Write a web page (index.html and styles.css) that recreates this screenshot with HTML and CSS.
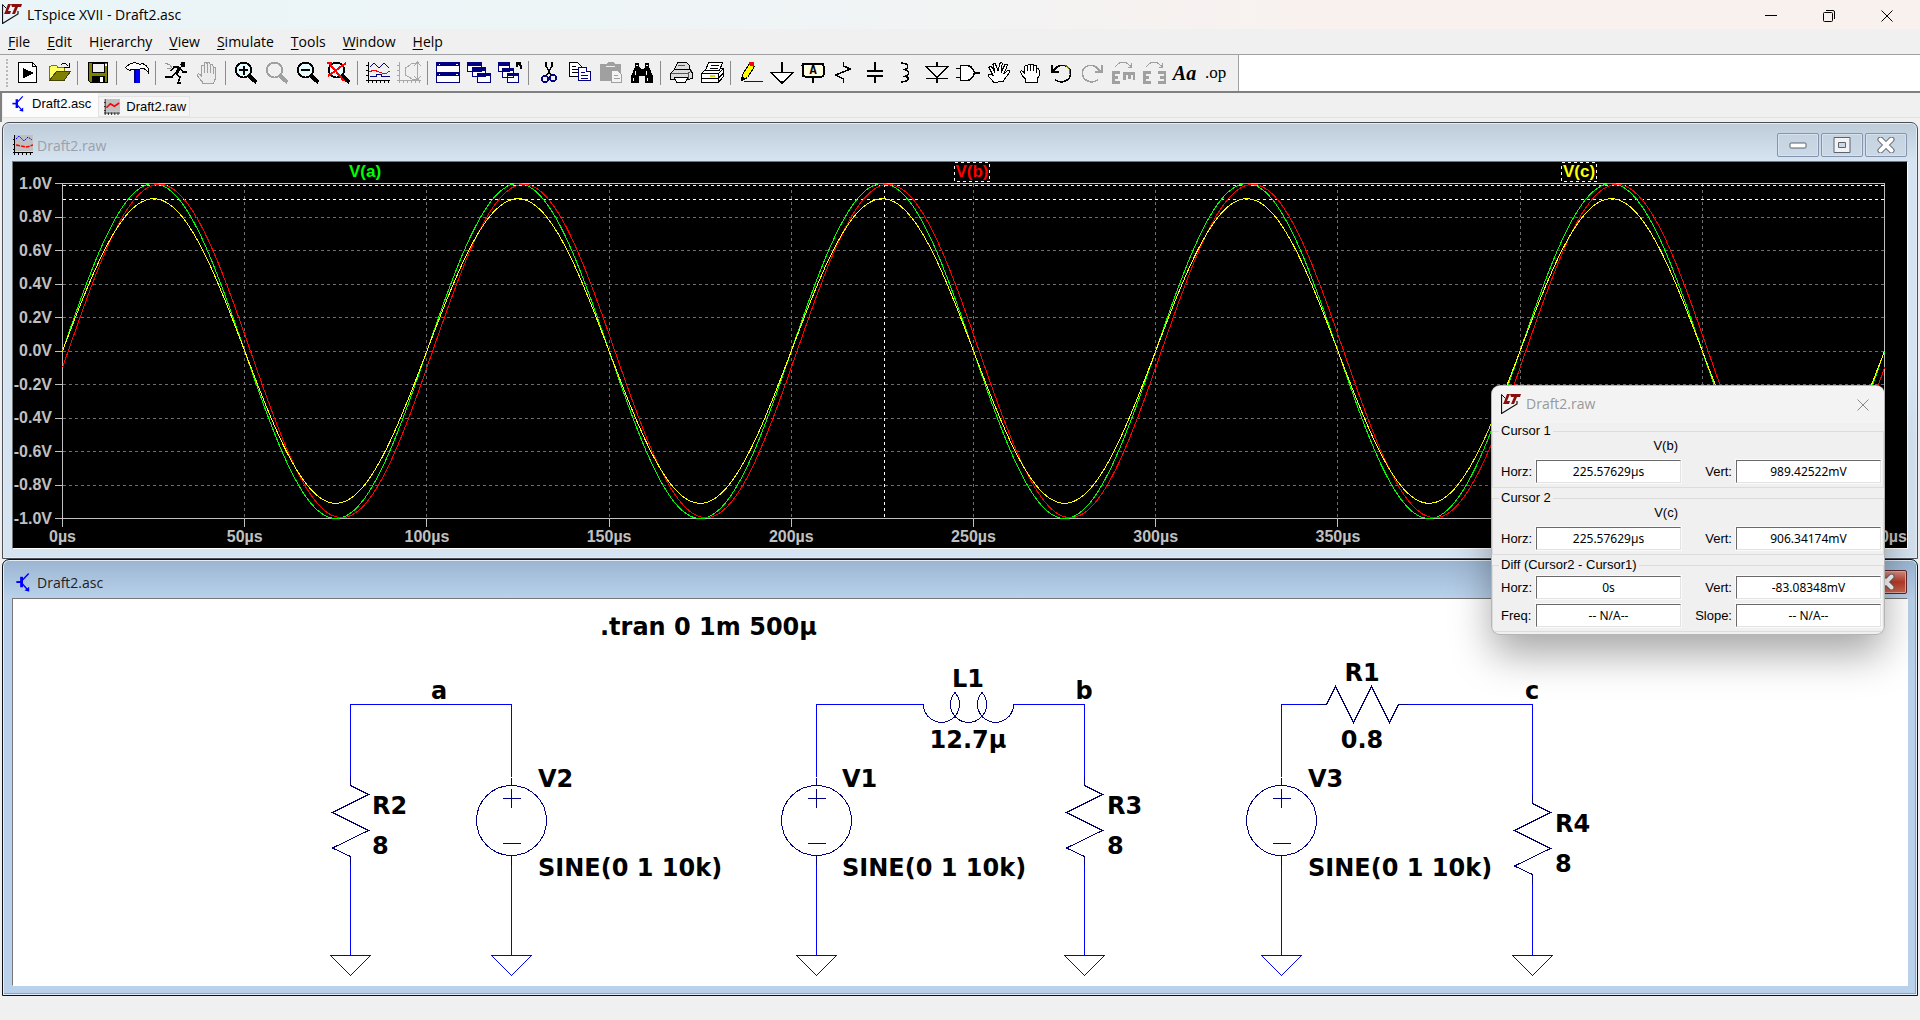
FILE: index.html
```html
<!DOCTYPE html>
<html lang="en">
<head>
  <meta charset="UTF-8" />
  <meta name="viewport" content="width=device-width, initial-scale=1.0"/>
  <title>LTspice XVII - Draft2.asc</title>
  <link rel="stylesheet" href="styles.css">
</head>
<body>
  <!-- Shared symbols -->
  <svg class="defs" width="0" height="0" aria-hidden="true">
    <symbol id="lt-logo" viewBox="0 0 20 20">
      <path d="M.5 .5v19L16 10V7" fill="none" stroke="#111" stroke-width="1.200"/>
      <path d="M.5 .5l4 4" fill="none" stroke="#111"/>
      <path d="M6 0h3L6 7h3l-1 3H2l1-2zM9 0h11l-1 3h-3l-3 7h-3l3-7h-3z" fill="#8b0d0d"/>
    </symbol>
    <symbol id="transistor" viewBox="0 0 16 20">
      <path d="M1 9.500h5" stroke="#00f" stroke-width="2"/>
      <path d="M6.500 4v11" stroke="#00f" stroke-width="3"/>
      <path d="M7 8l7-7.500M7 11l7 8" stroke="#00f" stroke-width="1.500" fill="none"/>
      <path d="M14.500 19.500v-5l-5 4z" fill="#00f"/>
    </symbol>
    <symbol id="wave-doc" viewBox="0 0 20 20">
      <path d="M2 0h18v16H2z" fill="#c0c0c0"/>
      <path d="M1.500 0v20M0 17.500h20M0 4.500h2M0 9.500h2M0 14.500h2M5.500 17v3M9.500 17v3M13.500 17v3M17.500 17v3" stroke="#000"/>
    </symbol>
    <symbol id="hand" viewBox="0 0 24 24">
      <path d="M8 22.500C7 19 2 16.500 2.500 13.500c1-1.500 2.500 0 4 1.500V5.500c0-2 2.500-2 2.500 0V3c0-2 3-2 3 0v-.5c0-2 3-2 3 0V5c0-2 3-2 3 0v3c0-2 2.500-2 2.500 0v8c0 3-1.500 4-2 6.500zM9.500 5v7M12.500 3v9M15.500 4v8M18 8v5"/>
    </symbol>
    <symbol id="fist" viewBox="0 0 24 24">
      <path d="M7.500 21.500V18C5 16 3 13 2.500 10.500c1-1.500 3 0 4 2V6c.5-2 3-2 3 0V5c.5-2 3-2 3 0 .5-2 3-2 3 0v1c.5-2 3-2 3 0v3c.5-2 2.500-2 2.500 0v6l-2 3v3.500zM9.500 6v4M12.500 5v5M15.500 6v4M18.500 9v3"/>
    </symbol>
    <symbol id="lens" viewBox="0 0 24 24">
      <circle cx="9.500" cy="9" r="7.500" stroke-width="2"/>
      <path d="M15.500 15l7 6.500" stroke-width="4"/>
    </symbol>
    <symbol id="minimize" viewBox="0 0 20 16">
      <rect x="2" y="6" width="16" height="5" rx="1" fill="#fff" stroke="#5b6270"/>
    </symbol>
    <symbol id="maximize" viewBox="0 0 20 16">
      <path d="M2 .5h16v15H2z" fill="#f3f3f3" stroke="#5b6270"/>
      <path d="M6.500 5.500h7v5h-7z" fill="#cbd8e5" stroke="#5b6270"/>
    </symbol>
    <symbol id="cross" viewBox="0 0 20 16">
      <path d="M4.500 2.500l11 11M15.500 2.500l-11 11" fill="none" stroke="#5b6270" stroke-width="6" stroke-linecap="round"/>
      <path d="M4.500 2.500l11 11M15.500 2.500l-11 11" fill="none" stroke="#fff" stroke-width="4" stroke-linecap="round"/>
    </symbol>
    <symbol id="source" viewBox="-40 -40 80 80" overflow="visible">
      <circle r="35"/>
      <path d="M0-32v19M-9-22H9M-9 23H9M0-43v8M0 35v9"/>
    </symbol>
  </svg>

  <header class="titlebar">
    <svg class="app-icon"><use href="#lt-logo"/></svg>
    <h1>LTspice XVII - Draft2.asc</h1>
    <div class="caption-buttons">
      <button aria-label="Minimize"><svg viewBox="0 0 14 14"><path d="M1 6.500h12"/></svg></button>
      <button aria-label="Restore"><svg viewBox="0 0 14 14"><rect x="1.500" y="3.500" width="9" height="9" rx="1"/><path d="M4 1.500h7q1.500 0 1.500 1.500v7"/></svg></button>
      <button aria-label="Close"><svg viewBox="0 0 14 14"><path d="M1.500 1.500l11 11M12.500 1.500l-11 11"/></svg></button>
    </div>
  </header>

  <nav class="menubar">
    <button><u>F</u>ile</button>
    <button><u>E</u>dit</button>
    <button>H<u>i</u>erarchy</button>
    <button><u>V</u>iew</button>
    <button><u>S</u>imulate</button>
    <button><u>T</u>ools</button>
    <button><u>W</u>indow</button>
    <button><u>H</u>elp</button>
  </nav>

  <div class="toolbar-row">
    <div class="toolbar" role="toolbar" aria-label="Main">
      <button aria-label="New Schematic"><svg viewBox="0 0 24 24"><path d="M2.500 1.500h14l4 4v16h-18z" fill="#fff" stroke="#000"/><path d="M16.500 1.500v4h4" fill="none" stroke="#000"/><path d="M7 7l11 5-11 5.500z"/></svg></button>
      <button aria-label="Open"><svg viewBox="0 0 24 24"><path d="M2.500 19.500V6l2-1.500h5L11 6.500h6.500V11H9z" fill="#ff6" stroke="#770"/><path d="M2.500 19.500l7-9h14l-6.500 9z" fill="#808000" stroke="#440"/><path d="M14 4q3-4 7 1M22 1.500v4.500h-5" fill="none" stroke="#000"/></svg></button>
      <span class="separator"></span>
      <button aria-label="Save"><svg viewBox="0 0 24 24"><path d="M2.500 1.500h19v20H4.500l-2-2z" fill="#808000" stroke="#000"/><path d="M6 2h12v9H6z" fill="#efefef" stroke="#000"/><path d="M6 14.500h13V22H6z"/><path d="M14 16h3v5h-3z" fill="#fff"/><path d="M19 3h2v2h-2z" fill="#fff"/></svg></button>
      <span class="separator"></span>
      <button aria-label="Control Panel"><svg viewBox="0 0 24 24"><path d="M9 9h6v13H9z" fill="#00f"/><path d="M9 9h2v13H9z" fill="#000080"/><path d="M.5 6.500C5 1.500 11 .5 15 3.500c2-2 6 0 8 3.500v4c-2-3-5-4-8-3H7.500C6 8 5.500 9 5 9.500L2.500 8.500z" fill="#fff" stroke="#000"/></svg></button>
      <span class="separator"></span>
      <button aria-label="Run"><svg viewBox="0 0 24 24"><path d="M1 2l5 2 3 4M3 7h4" fill="none" stroke="#999"/><circle cx="19" cy="3.500" r="2.500"/><path d="M16 6l-4 7" stroke="#000" stroke-width="3"/><path d="M16 7l3 4h4M15 6h-5l-3 4M12 13l4 3-2 6h3M11 12l-3 4H1" fill="none" stroke="#000" stroke-width="1.500"/></svg></button>
      <button aria-label="Halt" disabled><svg class="grey-fill"><use href="#hand"/></svg></button>
      <span class="separator"></span>
      <button aria-label="Zoom area"><svg class="zoom"><use href="#lens"/><path d="M5 9h9M9.500 4.500v9" stroke="#000" stroke-width="2"/></svg></button>
      <button aria-label="Pan" disabled><svg class="zoom grey-line"><use href="#lens"/></svg></button>
      <button aria-label="Zoom back"><svg class="zoom"><use href="#lens"/><path d="M5 9h9" stroke="#000" stroke-width="2"/></svg></button>
      <button aria-label="Zoom full extents"><svg class="zoom"><use href="#lens"/><path d="M1 1l16 19M19 2L1 15M0 2h5" fill="none" stroke="#f00" stroke-width="2"/></svg></button>
      <span class="separator"></span>
      <button aria-label="Autorange"><svg viewBox="0 0 24 24" fill="none"><path d="M2.500 1v21M0 19.500h24M0 4.500h2M0 9.500h2M0 14.500h2M6.500 19v3M10.500 19v3M14.500 19v3M18.500 19v3M22.500 19v3" stroke="#000"/><path d="M4 6l4-4 5 5 5-5 5 5M4 15.500h6v-2h5v2h9" stroke="#000080"/><path d="M3 11l5-2 5 2 6 2 5-3" stroke="#f00"/></svg></button>
      <button aria-label="Plot settings" disabled><svg viewBox="0 0 24 24" fill="none" stroke="#a8a8a8"><path d="M2.500 1v21M0 19.500h24M0 4.500h2M0 9.500h2M0 14.500h2M6.500 19v3M10.500 19v3M14.500 19v3M18.500 19v3M22.500 19v3M20 2.500h-5L8.500 7v7l6.500 4h5M20.500 1v18M17 5l3.500-4L24 5M17 15l3.500 4 3.500-4"/></svg></button>
      <span class="separator"></span>
      <button aria-label="Tile Horizontally"><svg viewBox="0 0 24 24"><path d="M.5 1.500h23v10H.5zM.5 11.500h23v10H.5z" fill="#fff" stroke="#000080"/><path d="M1 2h22v3H1zM1 12h22v3H1z" fill="#000080"/><path d="M3 3h1M20 3h2M3 13h1M20 13h2" stroke="#fff"/></svg></button>
      <button aria-label="Cascade"><svg viewBox="0 0 24 24"><g fill="#fff" stroke="#000080"><path d="M.5 1.500h14v9H.5zM5.500 6.500h13v9h-13zM10.500 12.500h13v9h-13z"/></g><path d="M1 2h13v3H1zM6 7h12v3H6zM11 13h12v2H11z" fill="#000080"/></svg></button>
      <button aria-label="Close all"><svg viewBox="0 0 24 24"><g fill="#fff" stroke="#000080"><path d="M.5 1.500h11v9H.5zM4.500 7.500h11v9h-11zM9.500 12.500h11v9h-11z"/></g><path d="M1 2h10v3H1zM5 8h10v2H5zM10 13h10v2H10z" fill="#000080"/><path d="M23 8V5l-4-3M18.500 6V1.500H23" fill="none" stroke="#000" stroke-width="2"/></svg></button>
      <span class="separator"></span>
      <button aria-label="Cut"><svg viewBox="0 0 24 24" fill="none"><path d="M9 1v4l5 9M15 1v4l-5 9" stroke="#000" stroke-width="1.500"/><circle cx="8" cy="18" r="3" stroke="#000080" stroke-width="1.500"/><circle cx="16" cy="17" r="3" stroke="#000080" stroke-width="1.500"/></svg></button>
      <button aria-label="Copy"><svg viewBox="0 0 24 24" fill="#fff"><path d="M1.500 1.500h8l4 4v10h-12z" stroke="#000"/><path d="M4 5h4M4 8h6M4 11h6" stroke="#000"/><path d="M10.500 6.500h8l4 4v9h-12z" stroke="#000080"/><path d="M18.500 6.500v4h4M13 11h4M13 14h7M13 17h7" stroke="#000080"/></svg></button>
      <button aria-label="Paste"><svg viewBox="0 0 24 24"><path d="M1 3h6l2-2h5l2 2h6v17H1z" fill="#a0a0a0"/><path d="M7 5h9" stroke="#eee"/><path d="M12.500 9.500h6l4 4v8h-10z" fill="#f3f3f3" stroke="#a0a0a0"/><path d="M15 14h4M15 17h6" stroke="#a0a0a0"/></svg></button>
      <button aria-label="Find"><svg viewBox="0 0 24 24"><path d="M5 2h4v4l2 2h2l2-2V2h4v4l4 9v7h-8v-7H9v7H1v-7l4-9z"/><path d="M6 4h2M16 4h2M5 10v4M16 10v4M3 17v3M17 17v3" stroke="#fff"/></svg></button>
      <span class="separator"></span>
      <button aria-label="Print Setup"><svg viewBox="0 0 24 24" stroke="#000"><path d="M5.500 8.500l3-7h9l3 3v4M1.500 12.500l4-4h16l1.500 3v6l-4 1h-17z" fill="#ddd"/><path d="M5.500 16.500h13l-2 5h-9z" fill="#fff"/><path d="M2 12.500h17l4-3M19 13v5M9 4h7" fill="none" stroke="#555"/></svg></button>
      <button aria-label="Print"><svg viewBox="0 0 24 24" stroke="#000" fill="#fff"><path d="M1.500 12.500l5-5h17v8l-5 6h-17z"/><path d="M5.500 9.500l3-8h14l-3 8z"/><path d="M1.500 12.500h17v9M18.500 12.500l5-5M2 17.500h16l5-5M11 4h8M10 7h8" fill="none"/><path d="M10 15h5" stroke="#dd0" stroke-width="2"/></svg></button>
      <span class="separator"></span>
      <button aria-label="Wire"><svg viewBox="0 0 24 24"><path d="M2.500 19.500l1-6 7-11 5 3-7 11z" fill="#ff0" stroke="#000"/><path d="M2 20l1-5 4 3z"/><path d="M10 1h5v5l-5-2z" fill="#f00"/><path d="M5 20.500h19" stroke="#00f"/></svg></button>
      <button aria-label="Ground"><svg viewBox="0 0 24 24"><path d="M12 1v10M1 11.500h22l-11 10.500z" fill="#fff" stroke="#000" stroke-width="1.500"/></svg></button>
      <button aria-label="Label Net"><svg viewBox="0 0 24 24"><rect x="1.500" y="2.500" width="21" height="13" rx="2" fill="#ffffe0" stroke="#000" stroke-width="2"/><path d="M12 16v6" stroke="#000" stroke-width="2"/><text x="12" y="13" class="net-letter">A</text></svg></button>
      <button aria-label="Resistor"><svg viewBox="0 0 24 24"><path d="M11.500 1v4l7 3-15 6 8 4v4" fill="none" stroke="#000" stroke-width="1.500"/></svg></button>
      <button aria-label="Capacitor"><svg viewBox="0 0 24 24"><path d="M12 1v9M12 15v7" stroke="#000" stroke-width="1.500"/><path d="M4 10h16M4 15h16" stroke="#000" stroke-width="2"/></svg></button>
      <button aria-label="Inductor"><svg viewBox="0 0 24 24"><path d="M8 1v1.500c7-1 8 6 1 6 8 0 7 7 0 7 7-1 7 5-1 5V22" fill="none" stroke="#000" stroke-width="1.500"/></svg></button>
      <button aria-label="Diode"><svg viewBox="0 0 24 24"><path d="M12 1v4M1 5.500h22l-11 11zM1 17.500h22M12 18v4" fill="none" stroke="#000" stroke-width="1.500"/></svg></button>
      <button aria-label="Component"><svg viewBox="0 0 24 24"><path d="M4.500 4.500h6c5 0 7 4 8 7-1 4-3 8-8 8h-6zM0 7.500h4M0 16.500h4M19 12h5" fill="#fff" stroke="#000" stroke-width="1.500"/></svg></button>
      <button aria-label="Move"><svg viewBox="0 0 24 24"><path d="M7 21.500l-6-7c0-2 2-2 5 0l-4-8c0-2 2-2 3 0l3 5-2-8c1-2 2-2 3 1l2 5 2-7c2-2 3 0 2 2l-1 7 4-8c2-1 3 0 2 2l-3 7 4-3c2 0 2 2 0 4l-5 7z" fill="#fff" stroke="#000"/></svg></button>
      <button aria-label="Drag"><svg class="white-fill"><use href="#fist"/></svg></button>
      <button aria-label="Undo"><svg viewBox="0 0 24 24" fill="none"><path d="M5 9c4-6 13-6 16 0 2 7-2 11-8 12-3 0-5-1-7-2" stroke="#000" stroke-width="1.500"/><path d="M16 4c4 2 5 5 5 9" stroke="#770"/><path d="M2.500 4v7h7M3 11l5-5" stroke="#000" stroke-width="2"/></svg></button>
      <button aria-label="Redo" disabled><svg viewBox="0 0 24 24" fill="none"><path d="M19 9C15 3 6 3 3 9c-2 7 2 11 8 12 3 0 5-1 7-2" stroke="#a0a0a0" stroke-width="1.500"/><path d="M21.500 4v7h-7M21 11l-5-5" stroke="#a0a0a0" stroke-width="2"/></svg></button>
      <button aria-label="Rotate" disabled><svg viewBox="0 0 24 24" fill="none" stroke="#a0a0a0"><path d="M4 6l5-4.500h6l5 4M20.500 2v4h-4"/><path d="M9 11H2v10h7M2 16h5M12 12.500h12M13 13v6M18 13v5M23 13v6" stroke-width="3"/></svg></button>
      <button aria-label="Mirror" disabled><svg viewBox="0 0 24 24" fill="none" stroke="#a0a0a0"><path d="M4 6l5-4.500h6l5 4M20.500 2v4h-4"/><path d="M9 11H2v10h7M2 16h5M16 11h7v10h-7M23 16h-5" stroke-width="3"/></svg></button>
      <button class="text-tool aa" aria-label="Text">Aa</button>
      <button class="text-tool" aria-label="SPICE Directive">.op</button>
    </div>
  </div>

  <nav class="tabs">
    <a class="tab active" href="#schematic"><svg class="tab-bjt"><use href="#transistor"/></svg>Draft2.asc</a>
    <a class="tab" href="#waveform"><svg viewBox="0 0 20 20"><use href="#wave-doc"/><path d="M3 11l5-5 5 3 6-4" fill="none" stroke="#f00" stroke-width="2"/></svg>Draft2.raw</a>
  </nav>

  <main class="workspace">
    <section class="window" id="waveform">
      <header class="window-title">
        <svg viewBox="0 0 20 20"><use href="#wave-doc"/><path d="M3 4l3-3 5 5 4-4 4 3" fill="none" stroke="#00f" stroke-dasharray="2 1"/><path d="M3 10l5 1 6 1 6-2" fill="none" stroke="#f00" stroke-width="1.500" stroke-dasharray="4 1"/></svg>
        <h2>Draft2.raw</h2>
        <div class="window-buttons">
          <button aria-label="Minimize"><svg><use href="#minimize"/></svg></button>
          <button aria-label="Maximize"><svg><use href="#maximize"/></svg></button>
          <button aria-label="Close"><svg><use href="#cross"/></svg></button>
        </div>
      </header>
      <div class="window-body">
        <svg class="plot" viewBox="0 0 1894 386" id="plot"></svg>
      </div>
    </section>

    <section class="window focused" id="schematic">
      <header class="window-title">
        <svg class="title-bjt"><use href="#transistor"/></svg>
        <h2>Draft2.asc</h2>
        <div class="window-buttons">
          <button aria-label="Minimize"><svg><use href="#minimize"/></svg></button>
          <button aria-label="Maximize"><svg><use href="#maximize"/></svg></button>
          <button class="close" aria-label="Close"><svg><use href="#cross"/></svg></button>
        </div>
      </header>
      <div class="window-body">
        <svg class="circuit" viewBox="0 0 1894 386">
          <!-- Wires and grounds -->
          <g class="wire">
            <path d="M337.500 186V105.500h161V178M337.500 257v99.500M498.500 266v90.500"/>
            <path d="M803.500 178V105.500h107M1000.500 105.500h71V186M803.500 266v90.500M1071.500 257v99.500"/>
            <path d="M1268.500 178V105.500h36M1394 105.500h125.500V196M1268.500 266v90.500M1519.500 284v72.500"/>
            <path d="M317.500 356.500h40l-20 20zM478.500 356.500h40l-20 20zM783.500 356.500h40l-20 20zM1051.500 356.500h40l-20 20zM1248.500 356.500h40l-20 20zM1499.500 356.500h40l-20 20z"/>
          </g>
          <!-- Parts -->
          <g class="part">
            <path d="M337.500 178v8.500l18 9-36 18 36 18-36 17.500 18 8.500v8"/>
            <path d="M1071.500 178v8.500l18 9-36 18 36 18-36 17.500 18 8.500v8"/>
            <path d="M1519.500 196v8.500l18 9-36 18 36 18-36 17.500 18 8.500v9"/>
            <path d="M1304 105.500h9.500l9-18 18 36 18-36 18 36 9-18h9"/>
            <path d="M910.500 105.500A18 18 0 1 0 942 93.500A18 18 0 1 0 969 93.500A18 18 0 1 0 1000.500 105.500"/>
            <use href="#source" x="458.500" y="181.500" width="80" height="80"/>
            <use href="#source" x="763.500" y="181.500" width="80" height="80"/>
            <use href="#source" x="1228.500" y="181.500" width="80" height="80"/>
          </g>
          <g class="label">
            <text x="587" y="36">.tran 0 1m 500µ</text>
            <text x="359" y="215">R2</text>
            <text x="359" y="255">8</text>
            <text x="525" y="188">V2</text>
            <text x="525" y="277">SINE(0 1 10k)</text>
            <text x="829" y="188">V1</text>
            <text x="829" y="277">SINE(0 1 10k)</text>
            <text x="1094" y="215">R3</text>
            <text x="1094" y="255">8</text>
            <text x="1295" y="188">V3</text>
            <text x="1295" y="277">SINE(0 1 10k)</text>
            <text x="1542" y="233">R4</text>
            <text x="1542" y="273">8</text>
          </g>
          <g class="label centered">
            <text x="426" y="100">a</text>
            <text x="955" y="88">L1</text>
            <text x="955" y="149">12.7µ</text>
            <text x="1071" y="100">b</text>
            <text x="1349" y="82">R1</text>
            <text x="1349" y="149">0.8</text>
            <text x="1519" y="100">c</text>
          </g>
        </svg>
      </div>
    </section>
  </main>

  <!-- Cursor readout -->
  <section class="cursor-dialog">
    <header>
      <svg class="app-icon"><use href="#lt-logo"/></svg>
      <h2>Draft2.raw</h2>
      <button aria-label="Close"><svg viewBox="0 0 14 14"><path d="M1.500 1.500l11 11M12.500 1.500l-11 11"/></svg></button>
    </header>
    <fieldset>
      <legend>Cursor 1</legend>
      <div class="readout">
        <span class="trace">V(b)</span>
        <label for="c1h">Horz:</label><input id="c1h" value="225.57629µs" readonly>
        <label for="c1v">Vert:</label><input id="c1v" value="989.42522mV" readonly>
      </div>
    </fieldset>
    <fieldset>
      <legend>Cursor 2</legend>
      <div class="readout">
        <span class="trace">V(c)</span>
        <label for="c2h">Horz:</label><input id="c2h" value="225.57629µs" readonly>
        <label for="c2v">Vert:</label><input id="c2v" value="906.34174mV" readonly>
      </div>
    </fieldset>
    <fieldset>
      <legend>Diff (Cursor2 - Cursor1)</legend>
      <div class="readout diff">
        <label for="dh">Horz:</label><input id="dh" value="0s" readonly>
        <label for="dv">Vert:</label><input id="dv" value="-83.08348mV" readonly>
        <label for="df">Freq:</label><input id="df" value="-- N/A--" readonly>
        <label for="ds">Slope:</label><input id="ds" value="-- N/A--" readonly>
      </div>
    </fieldset>
  </section>

  <script src="script.js"></script>
</body>
</html>
```
FILE: styles.css
```css
* {
  box-sizing: border-box;
}
body {
  margin: 0;
  min-height: 100vh;
  position: relative;
  background: #f0f0f0;
  color: #000;
  font-family: "Open Sans", "Noto Sans", sans-serif;
  font-size: 14px;
}
h1, h2 {
  margin: 0;
  font-size: 14px;
  font-weight: normal;
}
button {
  padding: 0;
  border: 0;
  background: none;
  color: inherit;
  font: inherit;
}
.defs {
  position: absolute;
}
.app-icon {
  width: 20px;
  height: 20px;
}

/* Application title and menu */
.titlebar {
  display: flex;
  align-items: center;
  gap: 5px;
  height: 29px;
  padding: 0 4px 1px 2px;
  background: linear-gradient(90deg, #e9f5f8, #eff4f6 40%, #f9f1ee 70%);
}
.caption-buttons {
  display: flex;
  margin-left: auto;
}
.caption-buttons button {
  width: 58px;
  height: 26px;
}
.caption-buttons svg,
.cursor-dialog button svg {
  width: 14px;
  height: 14px;
  fill: none;
  stroke: #000;
  vertical-align: middle;
}
.menubar {
  display: flex;
  gap: 17px;
  height: 26px;
  padding: 0 8px;
  border-bottom: 1px solid #a0a0a0;
}
.menubar u {
  text-underline-offset: 2px;
}

/* Toolbar */
.toolbar-row {
  display: flex;
  height: 38px;
  background: #fff;
  border-bottom: 2px solid #808080;
}
.toolbar {
  display: flex;
  align-items: center;
  padding: 0 7px 0 6px;
  background: #f0f0f0;
  border-right: 1px solid #a0a0a0;
}
.toolbar::before {
  content: "";
  height: 28px;
  margin-right: 4px;
  border-left: 2px dotted #b8b8b8;
}
.toolbar button {
  flex: none;
  width: 31px;
  height: 31px;
}
.toolbar svg {
  display: block;
  width: 24px;
  height: 24px;
  margin: 0 auto;
  shape-rendering: crispEdges;
}
.separator {
  flex: none;
  width: 8px;
  height: 24px;
  background: linear-gradient(#8c8c8c, #8c8c8c) 3px 0 / 1px 100% no-repeat;
}
.zoom {
  fill: #e4fbff;
  stroke: #000;
}
.grey-line {
  fill: #f0f0f0;
  stroke: #a0a0a0;
}
.grey-fill {
  fill: #ececec;
  stroke: #a0a0a0;
}
.white-fill {
  fill: #fff;
  stroke: #000;
}
.net-letter {
  font: bold 12px "Liberation Mono", monospace;
  text-anchor: middle;
}
.text-tool {
  font: 17px "Liberation Serif", serif;
}
.aa {
  font-size: 20px;
  font-style: italic;
  font-weight: bold;
}

/* Document tabs */
.tabs {
  display: flex;
  align-items: flex-start;
  height: 29px;
  padding-left: 1px;
  border-left: 2px solid #808080;
  background: linear-gradient(#e3e3e3, #e3e3e3) 0 24px / 100% 1px no-repeat;
}
.tab {
  display: flex;
  align-items: center;
  gap: 6px;
  height: 21px;
  margin-top: 3px;
  padding: 0 3px 0 5px;
  border: 1px solid #e3e3e3;
  background: #f5f5f5;
  color: #000;
  font: 13px "Liberation Sans", Arial, sans-serif;
  text-decoration: none;
}
.tab.active {
  height: 24px;
  margin-top: 0;
  padding: 0 6px 3px;
  background: #fcfcfc;
  border-color: #fcfcfc;
}
.tab svg {
  width: 16px;
  height: 16px;
}

/* Document windows */
.window {
  margin: 0 2px;
  padding: 0 9px 9px;
  border: 1px solid #4b4f55;
  border-radius: 7px 7px 0 0;
  background: linear-gradient(#becbd9, #d6e3f1 38px);
  box-shadow: inset 0 0 0 1px #e3edf7;
}
.focused {
  border-color: #111;
  background: linear-gradient(#9bb5d1, #b9d1ea 38px);
  box-shadow: inset 0 0 0 1px #e3edf7, inset -1px -1px 0 1px #35c9e8;
}
.window-title {
  display: flex;
  align-items: center;
  gap: 4px;
  height: 38px;
  padding: 6px 1px 0;
  color: #99a1aa;
}
.window-title svg {
  width: 20px;
  height: 20px;
}
.focused .window-title {
  color: #222;
}
.window-title .title-bjt {
  width: 20px;
  height: 19px;
}
.window-buttons {
  display: flex;
  gap: 2px;
  margin-left: auto;
}
.window-buttons button {
  width: 42px;
  height: 24px;
  border: 1px solid #8493ae;
  border-radius: 2px;
  background: linear-gradient(#c5d2df, #cbd9e7);
  box-shadow: inset 0 0 0 1px #d6e2ee;
}
.window-buttons svg {
  display: block;
  height: 16px;
  margin: 0 auto;
}
.window-buttons .close {
  border-color: #5c2229;
  background: linear-gradient(#d99386, #b83a27 50%, #cf6a50);
  box-shadow: inset 0 0 0 1px #e5a79b;
}
.window-body {
  border: 1px solid;
  border-color: #777 #fff #fff #777;
  background: #fff;
}
.window-body svg {
  display: block;
  width: 100%;
}

/* Waveform plot */
.plot {
  background: #000;
  fill: none;
  shape-rendering: crispEdges;
}
.plot text {
  fill: #c0c0c0;
  font: bold 16px "Liberation Sans", Arial, sans-serif;
  text-anchor: middle;
}
.plot .axis {
  stroke: #c0c0c0;
}
.plot .y-label {
  text-anchor: end;
}
.plot .grid {
  stroke: #6e6e6e;
  stroke-dasharray: 3 3;
}
.plot .cursor {
  stroke: #fff;
  stroke-dasharray: 3 3;
}
.plot .trace-name {
  font-size: 17px;
}
.plot .green { stroke: #0f0; }
.plot .red { stroke: #f00; }
.plot .yellow { stroke: #ff0; }
.plot text.green { fill: #0f0; stroke: none; }
.plot text.red { fill: #f00; stroke: none; }
.plot text.yellow { fill: #ff0; stroke: none; }

/* Schematic */
.circuit {
  fill: none;
}
.wire, .part {
  shape-rendering: crispEdges;
}
.wire {
  stroke: #00f;
}
.part {
  stroke: #000080;
}
.label {
  fill: #000;
  font: bold 24px "DejaVu Sans", Verdana, sans-serif;
}
.centered {
  text-anchor: middle;
}

/* Cursor readout */
.cursor-dialog {
  position: absolute;
  top: 386px;
  right: 36px;
  width: 392px;
  overflow: hidden;
  border-radius: 8px;
  background: #f0f0f0;
  box-shadow: 0 0 0 1px #b5b5b5, 0 20px 40px rgba(0, 0, 0, 0.35);
  font: 13px/16px "Liberation Sans", Arial, sans-serif;
}
.cursor-dialog header {
  display: flex;
  align-items: center;
  gap: 5px;
  height: 37px;
  padding: 0 14px 1px 9px;
  background: #f3f3f3;
  color: #999;
  font-family: "Open Sans", "Noto Sans", sans-serif;
}
.cursor-dialog header button {
  margin-left: auto;
}
.cursor-dialog button svg {
  stroke: #888;
}
.cursor-dialog fieldset {
  margin: 0 0 2px;
  padding: 0 2px 4px 6px;
  border: 1px solid #dcdcdc;
}
.cursor-dialog legend {
  padding: 0 2px;
}
.readout {
  display: grid;
  grid-template-columns: 31px 1fr 47px 1fr;
  align-items: center;
  column-gap: 4px;
  row-gap: 7px;
  padding-left: 2px;
}
.diff {
  padding-top: 3px;
  row-gap: 5px;
}
.trace {
  grid-column: 1 / 3;
  padding-right: 3px;
  line-height: 14px;
  text-align: right;
}
.trace + label {
  grid-column: 1;
}
.readout label {
  white-space: nowrap;
}
.readout label:nth-of-type(even) {
  text-align: right;
}
.readout input {
  width: 100%;
  min-width: 0;
  height: 23px;
  padding: 0;
  border: 1px solid;
  border-color: #696969 #e3e3e3 #e3e3e3 #696969;
  box-shadow: 0 0 0 1px #fafafa;
  background: #fff;
  font: 12px "Noto Sans", sans-serif;
  text-align: center;
}
```
FILE: script.js
```javascript
const svgNS = "http://www.w3.org/2000/svg";
const plot = document.getElementById("plot");

// Plot area inside the viewBox
const area = { left: 49.5, right: 1871.5, top: 21.5, bottom: 356.5 };
const endTime = 500; // µs
const timeLabels = [0, 50, 100, 150, 200, 250, 300, 350, 500];

const traces = [
  { name: "V(a)", color: "green", amp: 1, phase: 0, labelX: 352 },
  { name: "V(b)", color: "red", amp: 0.995, phase: 0.0994, labelX: 959, boxed: true },
  { name: "V(c)", color: "yellow", amp: 0.909, phase: 0, labelX: 1566, boxed: true }
];

function timeToX(t) {
  return area.left + (t / endTime) * (area.right - area.left);
}

function voltToY(v) {
  return (area.top + area.bottom) / 2 - v * (area.bottom - area.top) / 2;
}

function add(tag, attrs, text) {
  const el = document.createElementNS(svgNS, tag);
  for (const key in attrs) {
    el.setAttribute(key, attrs[key]);
  }
  if (text) el.textContent = text;
  plot.appendChild(el);
}

function line(x1, y1, x2, y2, cls) {
  add("line", { x1, y1, x2, y2, class: cls });
}

function drawAxes() {
  for (let i = 0; i <= 10; i++) {
    const volts = (10 - 2 * i) / 10;
    const y = voltToY(volts);
    if (i > 0 && i < 10) line(area.left, y, area.right, y, "grid");
    line(area.left - 8, y, area.left, y, "axis");
    add("text", { x: 39, y: y + 5, class: "y-label" }, volts.toFixed(1) + "V");

    const x = timeToX(i * 50);
    if (i > 0 && i < 10) line(x, area.top, x, area.bottom, "grid");
    line(x, area.bottom, x, area.bottom + 8, "axis");
  }
  timeLabels.forEach(t => {
    add("text", { x: timeToX(t), y: 380 }, t + "µs");
  });
  add("rect", {
    x: area.left,
    y: area.top,
    width: area.right - area.left,
    height: area.bottom - area.top,
    class: "axis"
  });
}

function drawTrace(trace) {
  const points = [];
  for (let t = 0; t <= endTime; t++) {
    const v = trace.amp * Math.sin(2 * Math.PI * t / 100 - trace.phase);
    points.push(timeToX(t).toFixed(1) + "," + voltToY(v).toFixed(1));
  }
  add("polyline", { points: points.join(" "), class: trace.color });
  add("text", { x: trace.labelX, y: 15, class: "trace-name " + trace.color }, trace.name);
  if (trace.boxed) {
    add("rect", { x: trace.labelX - 17.5, y: 0.5, width: 35, height: 19, class: "cursor" });
  }
}

drawAxes();
line(area.left, voltToY(0.98942522), area.right, voltToY(0.98942522), "cursor");
line(area.left, voltToY(0.90634174), area.right, voltToY(0.90634174), "cursor");
line(timeToX(225.57629), area.top, timeToX(225.57629), area.bottom, "cursor");
traces.forEach(drawTrace);
```
